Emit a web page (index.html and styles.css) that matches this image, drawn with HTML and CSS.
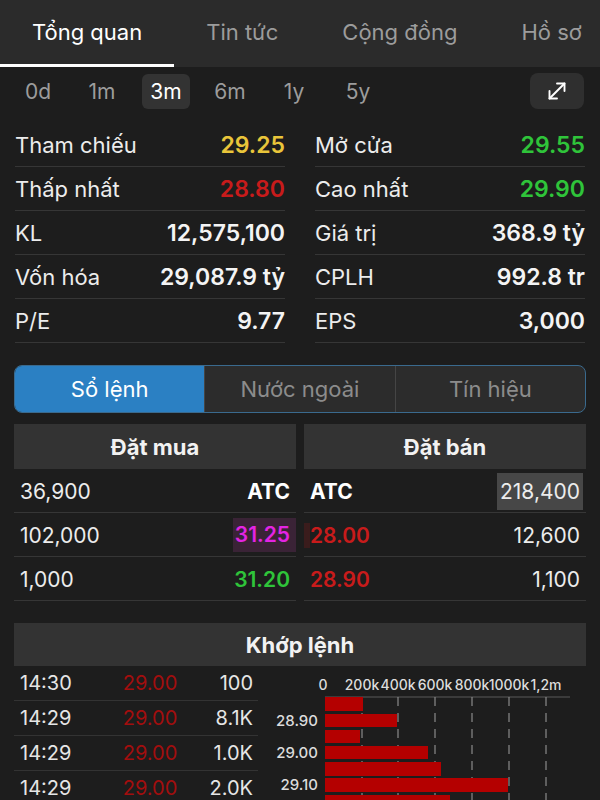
FILE: index.html
```html
<!DOCTYPE html>
<html lang="vi">
<head>
<meta charset="utf-8">
<title>Tổng quan</title>
<link rel="stylesheet" href="styles.css">
</head>
<body>
<div class="app">
  <nav class="tabs">
    <div class="tab active">Tổng quan</div>
    <div class="tab">Tin tức</div>
    <div class="tab">Cộng đồng</div>
    <div class="tab">Hồ sơ</div>
  </nav>

  <div class="periods">
    <span class="period">0d</span>
    <span class="period">1m</span>
    <span class="period active">3m</span>
    <span class="period">6m</span>
    <span class="period">1y</span>
    <span class="period">5y</span>
    <button class="expand" aria-label="Mở rộng">
      <svg width="22" height="22" viewBox="0 0 22 22" fill="none" stroke="#fff" stroke-width="1.9" stroke-linecap="round" stroke-linejoin="round">
        <path d="M3.5 18.5 L18.5 3.5"/>
        <path d="M11 3.5 H18.5 V11"/>
        <path d="M3.5 11 V18.5 H11"/>
      </svg>
    </button>
  </div>

  <div class="stats">
    <div class="stat-col">
      <div class="stat"><span class="label">Tham chiếu</span><span class="value yellow">29.25</span></div>
      <div class="stat"><span class="label">Thấp nhất</span><span class="value red">28.80</span></div>
      <div class="stat"><span class="label">KL</span><span class="value">12,575,100</span></div>
      <div class="stat"><span class="label">Vốn hóa</span><span class="value">29,087.9 tỷ</span></div>
      <div class="stat"><span class="label">P/E</span><span class="value">9.77</span></div>
    </div>
    <div class="stat-col">
      <div class="stat"><span class="label">Mở cửa</span><span class="value green">29.55</span></div>
      <div class="stat"><span class="label">Cao nhất</span><span class="value green">29.90</span></div>
      <div class="stat"><span class="label">Giá trị</span><span class="value">368.9 tỷ</span></div>
      <div class="stat"><span class="label">CPLH</span><span class="value">992.8 tr</span></div>
      <div class="stat"><span class="label">EPS</span><span class="value">3,000</span></div>
    </div>
  </div>

  <div class="seg">
    <div class="seg-item active">Sổ lệnh</div>
    <div class="seg-item">Nước ngoài</div>
    <div class="seg-item">Tín hiệu</div>
  </div>

  <div class="book">
    <div class="book-col">
      <div class="book-head">Đặt mua</div>
      <div class="book-row"><span class="qty">36,900</span><span class="bold">ATC</span></div>
      <div class="book-row"><span class="qty">102,000</span><span class="price magenta hl-buy">31.25</span></div>
      <div class="book-row"><span class="qty">1,000</span><span class="price green">31.20</span></div>
    </div>
    <div class="book-col">
      <div class="book-head">Đặt bán</div>
      <div class="book-row"><span class="bold">ATC</span><span class="qty boxed">218,400</span></div>
      <div class="book-row"><span class="price red hl-sell">28.00</span><span class="qty">12,600</span></div>
      <div class="book-row"><span class="price red">28.90</span><span class="qty">1,100</span></div>
    </div>
  </div>

  <div class="match-head">Khớp lệnh</div>

  <div class="match">
    <div class="trades">
      <div class="trade"><span class="t-time">14:30</span><span class="t-price">29.00</span><span class="t-vol">100</span></div>
      <div class="trade"><span class="t-time">14:29</span><span class="t-price">29.00</span><span class="t-vol">8.1K</span></div>
      <div class="trade"><span class="t-time">14:29</span><span class="t-price">29.00</span><span class="t-vol">1.0K</span></div>
      <div class="trade"><span class="t-time">14:29</span><span class="t-price">29.00</span><span class="t-vol">2.0K</span></div>
    </div>
    <svg class="chart" width="322" height="140" viewBox="0 0 322 140">
      <g font-size="14" font-weight="500" fill="#dcdcdc" text-anchor="middle">
        <text x="59" y="24">0</text>
        <text x="98" y="24">200k</text>
        <text x="134" y="24">400k</text>
        <text x="171" y="24">600k</text>
        <text x="208" y="24">800k</text>
        <text x="245" y="24">1000k</text>
        <text x="282" y="24">1,2m</text>
      </g>
      <line x1="61" y1="31" x2="306" y2="31" stroke="#5a5a5a" stroke-width="1"/>
      <g stroke="#8a8a8a" stroke-width="1.2" stroke-dasharray="9 7">
        <line x1="98" y1="31" x2="98" y2="140"/>
        <line x1="134" y1="31" x2="134" y2="140"/>
        <line x1="171" y1="31" x2="171" y2="140"/>
        <line x1="208" y1="31" x2="208" y2="140"/>
        <line x1="245" y1="31" x2="245" y2="140"/>
        <line x1="282" y1="31" x2="282" y2="140"/>
      </g>
      <g fill="#b40000">
        <rect x="61" y="31" width="38" height="14"/>
        <rect x="61" y="48" width="72" height="13"/>
        <rect x="61" y="64" width="35" height="13"/>
        <rect x="61" y="80" width="103" height="13"/>
        <rect x="61" y="96" width="116" height="14"/>
        <rect x="61" y="112" width="183" height="14"/>
        <rect x="61" y="129" width="125" height="14"/>
      </g>
      <g font-size="15" font-weight="500" fill="#dcdcdc" text-anchor="end">
        <text x="54" y="60">28.90</text>
        <text x="54" y="92">29.00</text>
        <text x="54" y="124">29.10</text>
      </g>
    </svg>
  </div>
</div>
</body>
</html>
```
FILE: styles.css
```css
* { box-sizing: border-box; }

html, body {
  margin: 0;
  padding: 0;
  background: #1d1d1d;
  color: #e8e8e8;
  font-family: "Inter", "Roboto", "Liberation Sans", sans-serif;
}

.app {
  width: 600px;
  height: 800px;
  overflow: hidden;
  background: #1d1d1d;
}

/* top tabs */
.tabs {
  display: flex;
  height: 67px;
  background: #2b2b2b;
  overflow: hidden;
  white-space: nowrap;
}
.tab {
  flex: none;
  display: flex;
  align-items: center;
  padding: 0 32px;
  font-size: 22px;
  color: #9c9c9c;
  border-bottom: 3px solid transparent;
}
.tab.active {
  color: #ffffff;
  border-bottom-color: #ffffff;
}

/* periods */
.periods {
  display: flex;
  align-items: flex-start;
  gap: 16px;
  padding: 7px 16px 0 14px;
  height: 56px;
}
.period {
  width: 48px;
  height: 35px;
  line-height: 36px;
  text-align: center;
  font-size: 21px;
  color: #9c9c9c;
  border-radius: 6px;
}
.period.active {
  background: #333333;
  color: #ffffff;
}
.expand {
  margin-left: auto;
  margin-top: -1px;
  width: 54px;
  height: 36px;
  border: none;
  border-radius: 8px;
  background: #2f2f2f;
  display: flex;
  align-items: center;
  justify-content: center;
  padding: 0;
}

/* stats */
.stats {
  display: grid;
  grid-template-columns: 1fr 1fr;
  column-gap: 30px;
  padding: 0 15px;
}
.stat {
  display: flex;
  justify-content: space-between;
  align-items: center;
  height: 44px;
  border-bottom: 1px solid #363636;
  font-size: 22px;
}
.label { color: #ececec; }
.value { color: #f4f4f4; font-weight: 600; font-size: 23px; }
.yellow { color: #e9c53a; }
.red { color: #c81b1b; }
.green { color: #2fc43a; }
.magenta { color: #e324e3; }

/* segmented */
.seg {
  display: flex;
  margin: 22px 14px 0;
  height: 48px;
  border: 1.5px solid #3a6a8e;
  border-radius: 8px;
  overflow: hidden;
  background: #2c2c2c;
}
.seg-item {
  flex: 1;
  display: flex;
  align-items: center;
  justify-content: center;
  font-size: 22px;
  color: #8c8c8c;
}
.seg-item + .seg-item { border-left: 1px solid #454545; }
.seg-item.active {
  background: #2b80c3;
  color: #ffffff;
}

/* order book */
.book {
  display: grid;
  grid-template-columns: 1fr 1fr;
  column-gap: 8px;
  padding: 0 14px;
  margin-top: 11px;
}
.book-head {
  height: 45px;
  background: #333333;
  display: flex;
  align-items: center;
  justify-content: center;
  font-size: 22px;
  font-weight: 700;
  color: #f2f2f2;
}
.book-row {
  display: flex;
  justify-content: space-between;
  align-items: center;
  height: 44px;
  padding: 1px 6px 0;
  border-bottom: 1px solid #363636;
  font-size: 21px;
}
.qty { color: #ececec; }
.bold { font-weight: 700; color: #ffffff; }
.price { font-weight: 600; }
.boxed {
  background: #474747;
  height: 37px;
  line-height: 37px;
  padding: 0 3px;
  margin-right: -3px;
}
.hl-buy {
  background: #3a2336;
  height: 34px;
  line-height: 34px;
  padding: 0 6px 0 2px;
  margin-right: -6px;
}
.hl-sell {
  box-shadow: -6px 0 0 #3a1c1c;
}

/* matched orders */
.match-head {
  margin: 22px 14px 0;
  height: 43px;
  background: #333333;
  display: flex;
  align-items: center;
  justify-content: center;
  font-size: 22px;
  font-weight: 700;
  color: #f2f2f2;
}
.match {
  display: flex;
  padding-left: 14px;
}
.trades { width: 244px; flex: none; }
.trade {
  display: grid;
  grid-template-columns: 95px 70px 1fr;
  align-items: center;
  height: 35px;
  padding: 0 5px 0 6px;
  border-bottom: 1px solid #333333;
  font-size: 20px;
}
.t-time { color: #e6e6e6; }
.t-price { color: #a30e0e; text-align: center; }
.t-vol { color: #e6e6e6; text-align: right; }
.chart {
  flex: none;
  margin-left: 6px;
  display: block;
  font-family: "Inter", "Roboto", "Liberation Sans", sans-serif;
}
```
